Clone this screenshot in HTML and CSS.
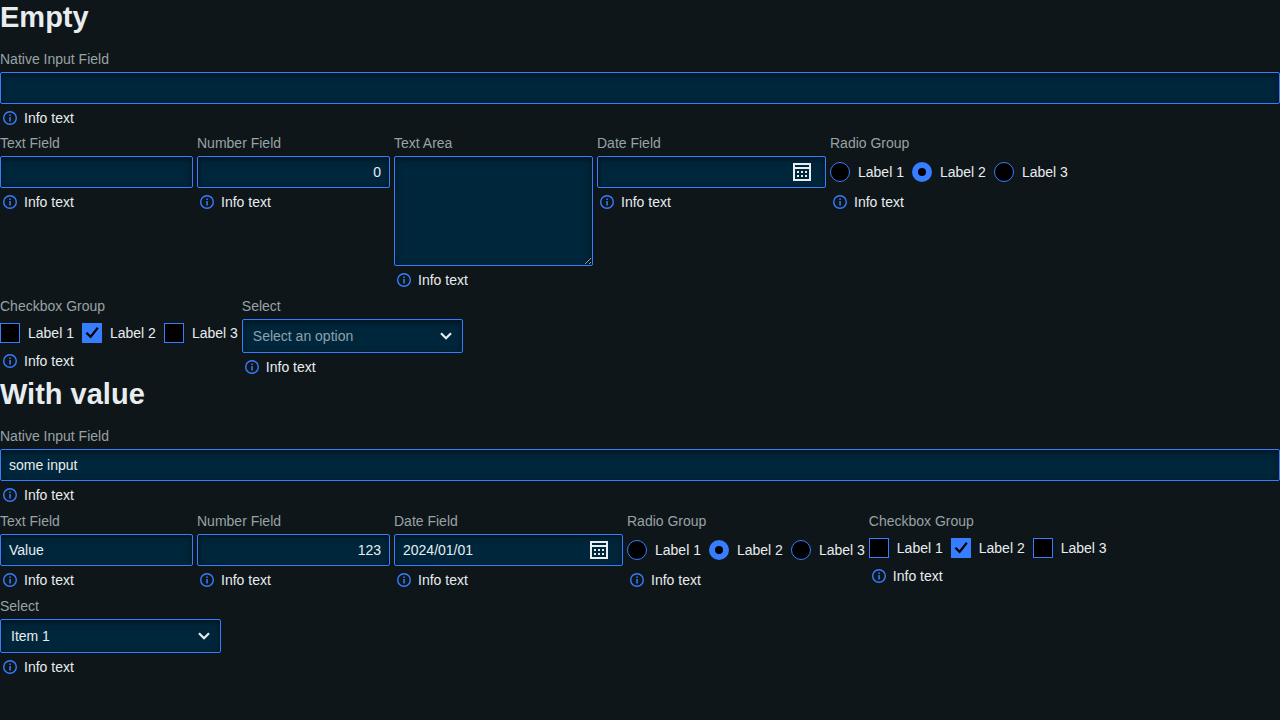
FILE: index.html
```html
<!DOCTYPE html>
<html lang="en">
<head>
<meta charset="utf-8">
<meta name="viewport" content="width=device-width, initial-scale=1">
<title>Form fields</title>
<link rel="stylesheet" href="styles.css">
</head>
<body>
<svg class="sprite" aria-hidden="true">
  <symbol id="info" viewBox="0 0 20 20">
    <circle cx="10" cy="10" r="6.3" fill="none" stroke="currentColor" stroke-width="1.4"/>
    <path fill="currentColor" d="M9.3 6.6h1.5v1.4H9.3zM9.3 9h1.5v4.4H9.3z"/>
  </symbol>
  <symbol id="calendar" viewBox="0 0 18 18">
    <path fill="currentColor" fill-rule="evenodd" d="M0 0h18v18H0zM2 2v2h14V2zM2 6v10h14V6z"/>
    <path fill="currentColor" d="M4 8h2v2H4zM8 8h2v2H8zM12 8h2v2h-2zM4 12h2v2H4zM8 12h2v2H8zM12 12h2v2h-2z"/>
  </symbol>
  <symbol id="chevron" viewBox="0 0 12 8">
    <path fill="none" stroke="currentColor" stroke-width="2.2" d="M1 1.2l5 5 5-5"/>
  </symbol>
  <symbol id="tick" viewBox="0 0 20 20">
    <path fill="none" stroke="currentColor" stroke-width="2.2" d="M4.4 9.7l4.2 4.2 7.2-9.2"/>
  </symbol>
</svg>

<section class="form form-empty">
  <h1>Empty</h1>
  <div class="field field-native">
    <label for="e-native">Native Input Field</label>
    <input class="control" id="e-native" type="text">
    <p class="info"><svg><use href="#info"/></svg>Info text</p>
  </div>
  <div class="fields">
    <div class="field field-text">
      <label for="e-text">Text Field</label>
      <input class="control" id="e-text" type="text">
      <p class="info"><svg><use href="#info"/></svg>Info text</p>
    </div>
    <div class="field field-text">
      <label for="e-number">Number Field</label>
      <input class="control number" id="e-number" type="number" value="0">
      <p class="info"><svg><use href="#info"/></svg>Info text</p>
    </div>
    <div class="field field-area">
      <label for="e-area">Text Area</label>
      <textarea class="control" id="e-area"></textarea>
      <p class="info"><svg><use href="#info"/></svg>Info text</p>
    </div>
    <div class="field field-date">
      <label for="e-date">Date Field</label>
      <div class="control date">
        <input id="e-date" type="text">
        <button type="button" aria-label="Open calendar"><svg><use href="#calendar"/></svg></button>
      </div>
      <p class="info"><svg><use href="#info"/></svg>Info text</p>
    </div>
    <fieldset class="field">
      <legend>Radio Group</legend>
      <div class="options radios">
        <label><input type="radio" name="e-radio">Label 1</label>
        <label><input type="radio" name="e-radio" checked>Label 2</label>
        <label><input type="radio" name="e-radio">Label 3</label>
      </div>
      <p class="info"><svg><use href="#info"/></svg>Info text</p>
    </fieldset>
    <fieldset class="field">
      <legend>Checkbox Group</legend>
      <div class="options">
        <label><span class="check"><input type="checkbox"><svg><use href="#tick"/></svg></span>Label 1</label>
        <label><span class="check"><input type="checkbox" checked><svg><use href="#tick"/></svg></span>Label 2</label>
        <label><span class="check"><input type="checkbox"><svg><use href="#tick"/></svg></span>Label 3</label>
      </div>
      <p class="info"><svg><use href="#info"/></svg>Info text</p>
    </fieldset>
    <div class="field field-select">
      <label for="e-select">Select</label>
      <div class="select">
        <select class="control placeholder" id="e-select"><option>Select an option</option></select>
        <svg><use href="#chevron"/></svg>
      </div>
      <p class="info"><svg><use href="#info"/></svg>Info text</p>
    </div>
  </div>
</section>

<section class="form">
  <h1>With value</h1>
  <div class="field field-native">
    <label for="v-native">Native Input Field</label>
    <input class="control" id="v-native" type="text" value="some input">
    <p class="info"><svg><use href="#info"/></svg>Info text</p>
  </div>
  <div class="fields">
    <div class="field field-text">
      <label for="v-text">Text Field</label>
      <input class="control" id="v-text" type="text" value="Value">
      <p class="info"><svg><use href="#info"/></svg>Info text</p>
    </div>
    <div class="field field-text">
      <label for="v-number">Number Field</label>
      <input class="control number" id="v-number" type="number" value="123">
      <p class="info"><svg><use href="#info"/></svg>Info text</p>
    </div>
    <div class="field field-date">
      <label for="v-date">Date Field</label>
      <div class="control date">
        <input id="v-date" type="text" value="2024/01/01">
        <button type="button" aria-label="Open calendar"><svg><use href="#calendar"/></svg></button>
      </div>
      <p class="info"><svg><use href="#info"/></svg>Info text</p>
    </div>
    <fieldset class="field">
      <legend>Radio Group</legend>
      <div class="options radios">
        <label><input type="radio" name="v-radio">Label 1</label>
        <label><input type="radio" name="v-radio" checked>Label 2</label>
        <label><input type="radio" name="v-radio">Label 3</label>
      </div>
      <p class="info"><svg><use href="#info"/></svg>Info text</p>
    </fieldset>
    <fieldset class="field">
      <legend>Checkbox Group</legend>
      <div class="options">
        <label><span class="check"><input type="checkbox"><svg><use href="#tick"/></svg></span>Label 1</label>
        <label><span class="check"><input type="checkbox" checked><svg><use href="#tick"/></svg></span>Label 2</label>
        <label><span class="check"><input type="checkbox"><svg><use href="#tick"/></svg></span>Label 3</label>
      </div>
      <p class="info"><svg><use href="#info"/></svg>Info text</p>
    </fieldset>
    <div class="field field-select">
      <label for="v-select">Select</label>
      <div class="select">
        <select class="control" id="v-select"><option>Item 1</option></select>
        <svg><use href="#chevron"/></svg>
      </div>
      <p class="info"><svg><use href="#info"/></svg>Info text</p>
    </div>
  </div>
</section>
</body>
</html>
```

FILE: styles.css
```css
:root {
  --bg: #0f1619;
  --control: #00263b;
  --accent: #377dff;
  --text: #e8edf0;
  --muted: #97a3a6;
}

* {
  box-sizing: border-box;
}

body {
  margin: 0;
  background: var(--bg);
  color: var(--text);
  font: 14px/20px "Liberation Sans", Arial, sans-serif;
}

input,
textarea,
select,
button {
  margin: 0;
  font: inherit;
  color: inherit;
}

.sprite {
  display: none;
}

h1 {
  margin: 0 0 15px;
  font-size: 29px;
  line-height: 34px;
}

.field {
  min-width: 0;
  margin: 0;
  padding: 0;
  border: 0;
}

.field > label,
.field > legend {
  display: block;
  margin-bottom: 2px;
  padding: 0;
  line-height: 21px;
  color: var(--muted);
}

.field-native {
  margin-bottom: 6px;
}

.form-empty .field-native {
  margin-bottom: 5px;
}

.fields {
  display: flex;
  flex-wrap: wrap;
  align-items: flex-start;
  gap: 6px 4px;
}

.field-text {
  width: 193px;
}

.field-area {
  width: 199px;
}

.field-date {
  width: 229px;
}

.field-select {
  width: 221px;
}

.control {
  display: block;
  width: 100%;
  height: 32px;
  padding: 0 8px;
  border: 1px solid var(--accent);
  border-radius: 2px;
  outline: 0;
  background: var(--control);
  box-shadow: inset 0 2px 6px rgba(0, 0, 0, 0.5);
}

textarea.control {
  height: 110px;
  padding: 6px 8px;
  resize: both;
}

.number {
  text-align: right;
  appearance: textfield;
}

.number::-webkit-inner-spin-button {
  display: none;
}

.date {
  display: flex;
  align-items: center;
  padding-right: 14px;
}

.date input {
  flex: 1;
  min-width: 0;
  padding: 0;
  border: 0;
  outline: 0;
  background: none;
}

.date button {
  display: flex;
  padding: 0;
  border: 0;
  background: none;
}

.date svg {
  width: 18px;
  height: 18px;
}

.select {
  position: relative;
}

.select .control {
  height: 34px;
  padding: 0 32px 0 10px;
  appearance: none;
}

.select .placeholder {
  color: #8ba3ac;
}

.select svg {
  position: absolute;
  top: 13px;
  right: 11px;
  width: 12px;
  height: 8px;
  pointer-events: none;
}

.info {
  display: flex;
  gap: 4px;
  margin: 4px 0 0;
}

.info svg {
  width: 20px;
  height: 20px;
  color: var(--accent);
}

.options {
  display: flex;
  gap: 8px;
  padding: 4px 0;
}

.radios {
  padding: 6px 0;
}

.options label {
  display: flex;
  gap: 8px;
}

.options input {
  display: block;
  width: 20px;
  height: 20px;
  appearance: none;
  border: 1px solid var(--accent);
  background: #000;
}

.options [type="radio"] {
  border-radius: 50%;
}

.options [type="radio"]:checked {
  border-width: 6px;
}

.check {
  position: relative;
}

.check svg {
  position: absolute;
  inset: 0;
  display: none;
  width: 20px;
  height: 20px;
  color: #000;
}

.check input:checked {
  background: var(--accent);
}

.check input:checked + svg {
  display: block;
}
```
